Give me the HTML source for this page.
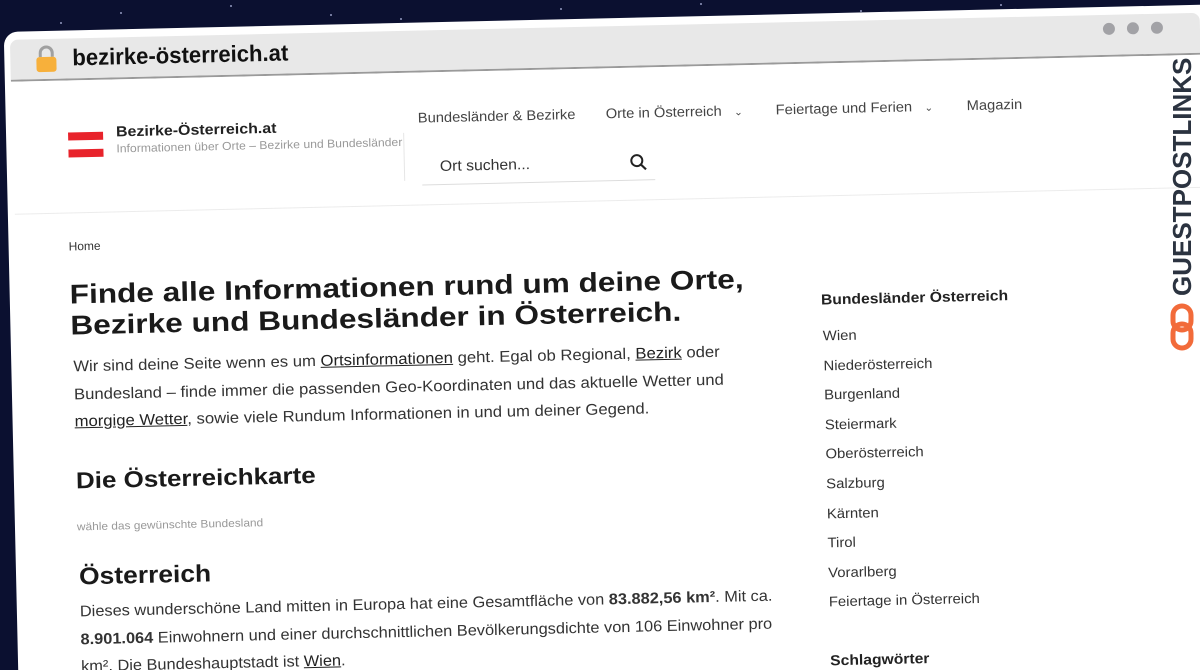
<!DOCTYPE html>
<html><head><meta charset="utf-8"><style>
html,body{margin:0;padding:0;width:1200px;height:670px;overflow:hidden;background:#0b1030;font-family:"Liberation Sans",sans-serif;}
#wrap{position:relative;width:1200px;height:670px;overflow:hidden;background:#0b1030}
.star{position:absolute;width:2px;height:2px;background:#cfd6ff;border-radius:50%;opacity:.7}
#rot{position:absolute;left:0;top:0;width:1300px;height:720px;transform-origin:0 0;transform:rotate(-1.3deg);}
.win{position:absolute;left:3px;top:32px;width:1220px;height:700px;background:#fff;border-radius:14px;}
.tab{position:absolute;left:9px;top:40px;width:1190px;height:40px;background:#e8e8e8;border-bottom:2px solid #9a9a9a;border-radius:8px 8px 0 0}
.a{position:absolute;white-space:nowrap;color:#222;transform-origin:0 0}
.nav{font-size:14px;color:#444;transform:scaleX(1.05)}
.p{font-size:15.5px;color:#333}
.p u{color:#222}
.sb{font-size:14px;color:#333;transform:scaleX(1.06)}
.dot{position:absolute;width:12px;height:12px;border-radius:50%;background:#a2a2a6;top:48px}
</style></head><body><div id="wrap">
<div class="star" style="left:120px;top:12px"></div><div class="star" style="left:230px;top:5px"></div><div class="star" style="left:400px;top:18px"></div><div class="star" style="left:560px;top:8px"></div><div class="star" style="left:700px;top:3px"></div><div class="star" style="left:860px;top:10px"></div><div class="star" style="left:1000px;top:4px"></div><div class="star" style="left:60px;top:22px"></div><div class="star" style="left:330px;top:14px"></div>
<div id="rot">
<div class="win"></div>
<div class="tab"></div>
<div class="dot" style="left:1102px"></div><div class="dot" style="left:1126px"></div><div class="dot" style="left:1150px"></div>
<svg class="a" style="left:34px;top:46px" width="22" height="28" viewBox="0 0 22 28"><path d="M5 12V8a6 6 0 0 1 12 0v4" fill="none" stroke="#a0a0a0" stroke-width="3"/><rect x="1" y="12" width="20" height="15" rx="3" fill="#f7b03b"/></svg>
<div class="a" style="left:71px;top:46px;font-size:23px;font-weight:bold;color:#111;transform:scaleX(0.96)">bezirke-österreich.at</div>

<div class="a" style="left:65px;top:134px;width:35px;height:8px;background:#e8232b"></div>
<div class="a" style="left:65px;top:151px;width:35px;height:8px;background:#e8232b"></div>
<div class="a" style="left:113px;top:127px;font-size:14.5px;font-weight:bold;color:#222;transform:scaleX(1.1)">Bezirke-Österreich.at</div>
<div class="a" style="left:113px;top:146px;font-size:11.5px;color:#999;transform:scaleX(1.06)">Informationen über Orte – Bezirke und Bundesländer</div>
<div class="a" style="left:400px;top:142px;width:1px;height:48px;background:#e6e6e6"></div>

<div class="a nav" style="left:415px;top:119px">Bundesländer &amp; Bezirke</div>
<div class="a nav" style="left:603px;top:119px">Orte in Österreich &nbsp;&nbsp;<span style="font-size:10px">&#8964;</span></div>
<div class="a nav" style="left:773px;top:119px">Feiertage und Ferien &nbsp;&nbsp;<span style="font-size:10px">&#8964;</span></div>
<div class="a nav" style="left:964px;top:119px">Magazin</div>
<div class="a" style="left:436px;top:168px;font-size:15px;color:#333;transform:scaleX(1.05)">Ort suchen...</div>
<svg class="a" style="left:626px;top:168px" width="18" height="18" viewBox="0 0 18 18"><circle cx="7" cy="7" r="5.5" fill="none" stroke="#222" stroke-width="2"/><path d="M11 11l5 5" stroke="#222" stroke-width="2.2"/></svg>
<div class="a" style="left:418px;top:194px;width:233px;height:1px;background:#ddd"></div>
<div class="a" style="left:10px;top:214px;width:1190px;height:1px;background:#ececec"></div>

<div class="a" style="left:63px;top:241px;font-size:12px;color:#333">Home</div>
<div class="a" style="left:63px;top:281px;font-size:27px;font-weight:bold;color:#1a1a1a;line-height:31px;transform:scaleX(1.17)">Finde alle Informationen rund um deine Orte,<br>Bezirke und Bundesländer in Österreich.</div>
<div class="a p" style="left:65px;top:355px;line-height:27.5px;transform:scaleX(1.075)">Wir sind deine Seite wenn es um <u>Ortsinformationen</u> geht. Egal ob Regional, <u>Bezirk</u> oder<br>Bundesland – finde immer die passenden Geo-Koordinaten und das aktuelle Wetter und<br><u>morgige Wetter</u>, sowie viele Rundum Informationen in und um deiner Gegend.</div>
<div class="a" style="left:65px;top:469px;font-size:23px;font-weight:bold;color:#1a1a1a;transform:scaleX(1.13)">Die Österreichkarte</div>
<div class="a" style="left:65px;top:523px;font-size:11px;color:#999;transform:scaleX(1.08)">wähle das gewünschte Bundesland</div>
<div class="a" style="left:66px;top:565px;font-size:24px;font-weight:bold;color:#1a1a1a;transform:scaleX(1.1)">Österreich</div>
<div class="a p" style="left:66px;top:600px;line-height:27.5px;transform:scaleX(1.055)">Dieses wunderschöne Land mitten in Europa hat eine Gesamtfläche von <b>83.882,56 km²</b>. Mit ca.<br><b>8.901.064</b> Einwohnern und einer durchschnittlichen Bevölkerungsdichte von 106 Einwohner pro<br>km². Die Bundeshauptstadt ist <u>Wien</u>.</div>

<div class="a" style="left:814px;top:311px;font-size:14.5px;font-weight:bold;color:#222;transform:scaleX(1.08)">Bundesländer Österreich</div>
<div class="a sb" style="left:815px;top:340px;line-height:29.6px">Wien<br>Niederösterreich<br>Burgenland<br>Steiermark<br>Oberösterreich<br>Salzburg<br>Kärnten<br>Tirol<br>Vorarlberg<br>Feiertage in Österreich</div>
<div class="a" style="left:815px;top:672px;font-size:14.5px;font-weight:bold;color:#222;transform:scaleX(1.08)">Schlagwörter</div>
</div>
<div class="a" style="left:1167px;top:296px;transform:rotate(-90deg);font-size:26px;font-weight:900;color:#2b3340;font-family:'Liberation Sans',sans-serif">GUESTPOSTLINKS</div>
<svg class="a" style="left:1170px;top:303px" width="24" height="48" viewBox="0 0 24 48"><rect x="3" y="3" width="18" height="24" rx="9" fill="none" stroke="#f26b3a" stroke-width="5"/><rect x="3" y="21" width="18" height="24" rx="9" fill="none" stroke="#f26b3a" stroke-width="5"/></svg>
</div></body></html>
